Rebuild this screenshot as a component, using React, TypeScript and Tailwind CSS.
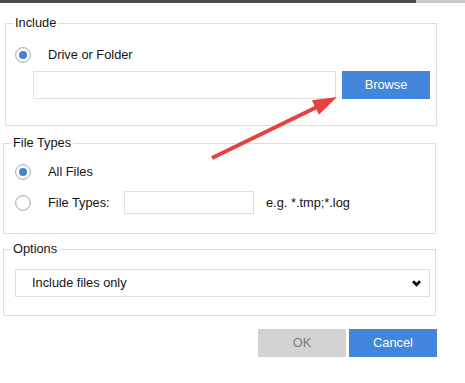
import React from "react";

function Radio({ checked }: { checked?: boolean }) {
  return (
    <span className="flex h-[16px] w-[16px] shrink-0 items-center justify-center rounded-full border border-[#b3b3b3] bg-white shadow-[inset_0_0_0_1px_#ececec]">
      {checked && <span className="h-[8px] w-[8px] rounded-full bg-[#3d87c7]" />}
    </span>
  );
}

export default function App() {
  return (
    <div className="relative h-[383px] w-[465px] bg-white font-['Liberation_Sans',Arial,sans-serif] text-[12.8px] text-[#141414]">
      {/* window top edge */}
      <div className="flex h-[3px]">
        <div className="w-[416px] bg-[#4b4b4b]" />
        <div className="flex-1 bg-[#c9c9c9]" />
      </div>

      {/* Include */}
      <fieldset className="ml-[5px] mt-[13px] w-[432px] border border-[#dedede] pb-[26px]">
        <legend className="ml-[7px] px-[2px] leading-[14px]">Include</legend>
        <div className="mt-[17px] flex h-[16px] items-center pl-[9px]">
          <Radio checked />
          <span className="ml-[17px]">Drive or Folder</span>
        </div>
        <div className="mt-[8px] flex pl-[27px]">
          <input className="h-[28px] w-[303px] border border-[#dedede] bg-white px-2 outline-none" />
          <button className="ml-[6px] h-[28px] w-[88px] bg-[#4285dc] text-white">Browse</button>
        </div>
      </fieldset>

      {/* File Types */}
      <fieldset className="ml-[3px] mt-[10px] w-[433px] border border-[#dedede] pb-[19px]">
        <legend className="ml-[7px] px-[2px] leading-[14px]">File Types</legend>
        <div className="mt-[14px] flex h-[16px] items-center pl-[11px]">
          <Radio checked />
          <span className="ml-[17px]">All Files</span>
        </div>
        <div className="mt-[11px] flex h-[23px] items-center pl-[11px]">
          <Radio />
          <span className="ml-[17px] w-[76px]">File Types:</span>
          <input className="h-[23px] w-[130px] border border-[#dedede] bg-white px-1 outline-none" />
          <span className="ml-[12px]">e.g. *.tmp;*.log</span>
        </div>
      </fieldset>

      {/* Options */}
      <fieldset className="ml-[3px] mt-[8px] w-[433px] border border-[#dedede] pb-[18px]">
        <legend className="ml-[7px] px-[2px] leading-[14px]">Options</legend>
        <div className="mt-[13px] pl-[11px]">
          <div className="flex h-[28px] w-[415px] items-center justify-between border border-[#dedede] bg-white pl-[16px] pr-[8px]">
            <span>Include files only</span>
            <svg width="9" height="7" viewBox="0 0 9 7">
              <path d="M1 1.2 L4.5 4.8 L8 1.2" fill="none" stroke="#111" strokeWidth="2.8" />
            </svg>
          </div>
        </div>
      </fieldset>

      {/* Dialog buttons */}
      <div className="mt-[13px] flex w-[437px] justify-end gap-[3px]">
        <button className="h-[28px] w-[88px] bg-[#d3d3d3] text-[#7b7b7b]">OK</button>
        <button className="h-[28px] w-[88px] bg-[#4285dc] text-white">Cancel</button>
      </div>

      {/* annotation arrow */}
      <svg className="pointer-events-none absolute left-0 top-0" width="465" height="383">
        <line x1="212" y1="158" x2="320" y2="105.5" stroke="#e8413f" strokeWidth="4" />
        <polygon points="337,97 311.9,100.3 318.9,114.7" fill="#e8413f" />
      </svg>
    </div>
  );
}
